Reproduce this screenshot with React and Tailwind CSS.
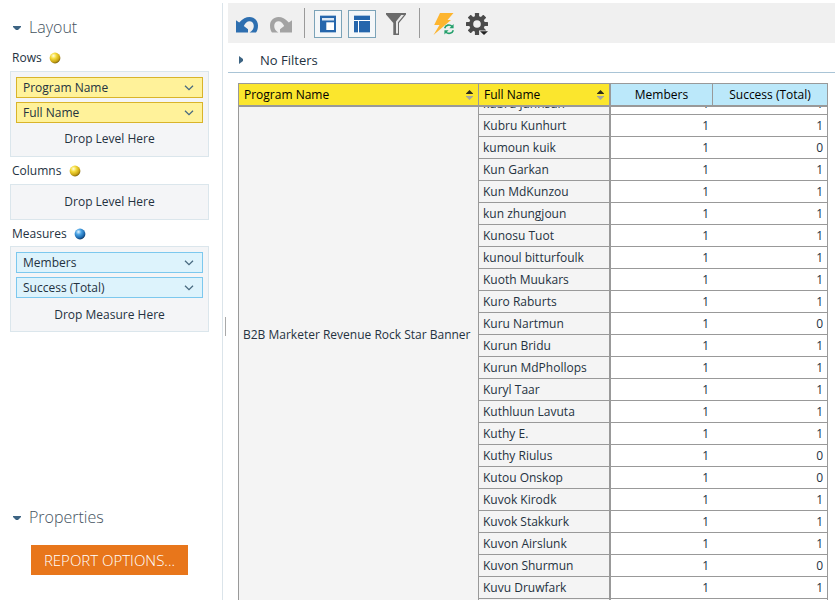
const rows = [
  ['Kubru Kunhurt', 1], ['kumoun kuik', 0], ['Kun Garkan', 1], ['Kun MdKunzou', 1],
  ['kun zhungjoun', 1], ['Kunosu Tuot', 1], ['kunoul bitturfoulk', 1], ['Kuoth Muukars', 1],
  ['Kuro Raburts', 1], ['Kuru Nartmun', 0], ['Kurun Bridu', 1], ['Kurun MdPhollops', 1],
  ['Kuryl Taar', 1], ['Kuthluun Lavuta', 1], ['Kuthy E.', 1], ['Kuthy Riulus', 0],
  ['Kutou Onskop', 0], ['Kuvok Kirodk', 1], ['Kuvok Stakkurk', 1], ['Kuvon Airslunk', 1],
  ['Kuvon Shurmun', 0], ['Kuvu Druwfark', 1],
];

function Ball({ blue }) {
  const id = blue ? 'ballBlue' : 'ballGold';
  return (
    <svg width="12" height="12" viewBox="0 0 12 12" className="-mt-px">
      <defs>
        <radialGradient id={id} cx="0.36" cy="0.3" r="0.75">
          <stop offset="0" stopColor={blue ? '#e2f4ff' : '#fffde0'} />
          <stop offset="0.35" stopColor={blue ? '#4aa3e4' : '#f5dc3c'} />
          <stop offset="0.75" stopColor={blue ? '#1d69ae' : '#c9a414'} />
          <stop offset="1" stopColor={blue ? '#0c2f58' : '#71590c'} />
        </radialGradient>
      </defs>
      <circle cx="6" cy="6" r="5.4" fill={`url(#${id})`} />
    </svg>
  );
}

function Heading({ children }) {
  return (
    <div className="flex h-6 items-center pl-[13px] text-[16px] font-light text-[#44525e]">
      <svg width="8" height="4" viewBox="0 0 8 4" className="mt-[4px] mr-2"><path d="M0 0h8v1L5 4H3L0 1z" fill="#3d6483" /></svg>
      <span className="pt-[2px]">{children}</span>
    </div>
  );
}

function Label({ children, blue, gap }) {
  return (
    <div className="flex h-[26px] items-center pl-3">
      <span className={gap}>{children}</span>
      <Ball blue={blue} />
    </div>
  );
}

function Chip({ children, blue }) {
  return (
    <div className={`flex h-[21px] items-center justify-between border pr-2 pl-1.5 ${blue ? 'border-[#7cc8ee] bg-[#ddf3fc]' : 'border-[#d9b42a] bg-[#fff29a]'}`}>
      <span>{children}</span>
      <svg width="10" height="6" viewBox="0 0 10 6"><path d="M1 .8l4 3.8 4-3.8" fill="none" stroke="#486a80" strokeWidth="1.3" /></svg>
    </div>
  );
}

function Zone({ children, text, size, textPad }) {
  return (
    <div className={`ml-2.5 flex w-[199px] flex-col gap-1 border border-[#dbe6ec] bg-[#f4f5f7] px-[5px] ${size}`}>
      {children}
      <div className={`flex flex-1 items-center justify-center ${textPad || ''}`}>{text}</div>
    </div>
  );
}

function Sort() {
  return (
    <svg width="7" height="10" viewBox="0 0 7 10">
      <path d="M3.5 0L7 3.4V4H0v-.6z" fill="#2c2a16" />
      <path d="M0 6h7v.6L3.5 10 0 6.6z" fill="#a5a5a0" />
    </svg>
  );
}

function Arrow({ color, flip }) {
  return (
    <svg width="22" height="16" viewBox="0 0 22 16" className={flip ? '-scale-x-100' : ''}>
      <path d="M0 3.2L3.2 5.6C6.8 1.6 10 0 13.5 0 18.5 0 22 3.7 22 8.4c0 3-.7 5.6-2 7h-6.4c2.6-1.5 4.2-3.7 4.2-6.5 0-2.7-1.8-4.7-4.4-4.7-2.2 0-4.1 1.6-5.6 4.8l4.2 3.2v3.2H0z" fill={color} />
    </svg>
  );
}

function Gear() {
  return (
    <svg width="23" height="22" viewBox="0 0 23 22">
      <g fill="#4b4b4b">
        {[0, 45, 90, 135].map((a) => (
          <rect key={a} x="8.9" y="0" width="4.2" height="22" rx="0.5" transform={`rotate(${a} 11 11)`} />
        ))}
        <circle cx="11" cy="11" r="7.9" />
      </g>
      <circle cx="11" cy="11" r="3.8" fill="#f0f0f0" />
      <path d="M13 17.5h10v1L18 22.5l-5-4z" fill="#f0f0f0" />
      <path d="M14 18.3h8L18 22z" fill="#222" />
    </svg>
  );
}

export default function App() {
  return (
    <div className="flex h-[600px] w-[835px] overflow-hidden bg-white font-['Open_Sans','Noto_Sans',sans-serif] text-[12px] leading-none text-[#24323f]">
      <aside className="mt-[3px] flex w-[223px] shrink-0 flex-col border-r border-[#dbe4ea] pt-[11px]">
        <Heading>Layout</Heading>
        <div className="pt-[7px]"><Label gap="mr-[7px]">Rows</Label></div>
        <Zone text="Drop Level Here" size="h-[86px] pt-[5px]" textPad="pb-1.5">
          <Chip>Program Name</Chip>
          <Chip>Full Name</Chip>
        </Zone>
        <div className="pt-px"><Label gap="mr-[8px]">Columns</Label></div>
        <Zone text="Drop Level Here" size="h-9" />
        <div className="pt-px"><div className="-mb-px"><Label blue gap="mr-[7px]">Measures</Label></div></div>
        <Zone text="Drop Measure Here" size="h-[86px] pt-[5px]" textPad="pb-[3px]">
          <Chip blue>Members</Chip>
          <Chip blue>Success (Total)</Chip>
        </Zone>
        <div className="pt-[172px]"><Heading>Properties</Heading></div>
        <button className="mt-[17px] ml-[31px] h-[30px] w-[157px] shrink-0 bg-[#e8761b] text-[15px] font-light text-white">REPORT OPTIONS...</button>
      </aside>
      <div className="flex w-[5px] shrink-0 items-start pt-[317px] pl-[2px]"><div className="h-[19px] w-px bg-[#a9a9a9]" /></div>
      <main className="flex min-w-0 flex-1 flex-col pt-[3px]">
        <div className="flex h-10 shrink-0 items-center bg-[#f0f0f0] pl-2">
          <div className="flex items-center gap-3 pt-1"><Arrow color="#2e6fb0" /><Arrow color="#a3a3a3" flip /></div>
          <div className="ml-3 h-[30px] w-px bg-[#9a9a9a]" />
          <div className="ml-[9px] flex gap-1.5 pt-[2px]">
            <div className="flex size-7 items-center justify-center border border-[#7ba3b8] bg-[#f4f7f9]">
              <svg width="16" height="18" viewBox="0 0 16 18"><path d="M0 0h16v18H0z" fill="#aac4de" /><path d="M0 1h16v16H0z" fill="#2566ac" /><path d="M2 3h12v2.5H2z" fill="#dce8f4" /><path d="M6.3 7.3H14V15H6.3z" fill="#fff" /></svg>
            </div>
            <div className="flex size-7 items-center justify-center border border-[#7ba3b8] bg-[#f4f7f9]">
              <svg width="16" height="18" viewBox="0 0 16 18"><path d="M0 0h16v18H0z" fill="#aac4de" /><path d="M0 1h16v16H0z" fill="#2566ac" /><path d="M0 5h16v1H5v12H4V6H0z" fill="#fff" /></svg>
            </div>
          </div>
          <svg width="20" height="22" viewBox="0 0 20 22" className="mt-px ml-2.5"><path d="M0 0h20v1.5L13 10v12H7.3V10L0 1.5z" fill="#6b6b6b" /><path d="M15.2 2H18l-6 7.3V20.5H10V8.5z" fill="#fff" opacity=".85" /></svg>
          <div className="ml-[13px] h-[30px] w-px bg-[#9a9a9a]" />
          <svg width="21" height="22" viewBox="0 0 21 22" className="mt-[2px] ml-[13px]">
            <path d="M7 0h13.5l-6 7H18L.5 22l6-10H1.2z" fill="#fdb52f" />
            <circle cx="16" cy="16.2" r="5.5" fill="#f0f0f0" />
            <path d="M11.7 15.2a4.3 4.3 0 0 1 7.4-1.7M20.3 17.2a4.3 4.3 0 0 1-7.4 1.7" fill="none" stroke="#24a06c" strokeWidth="1.6" />
            <path d="M20.6 11v4.2h-4.2zM11.4 21.4v-4.2h4.2z" fill="#24a06c" />
          </svg>
          <div className="mt-[2px] ml-3"><Gear /></div>
        </div>
        <div className="flex h-[30px] shrink-0 items-center border-b border-[#a9c4d6] pt-[5px] pl-[11px] text-[13px]">
          <svg width="4" height="8" viewBox="0 0 4 8" className="mr-[17px]"><path d="M0 0v8l4-3V3z" fill="#3d6483" /></svg>
          No Filters
        </div>
        <div className="mt-2.5 ml-2.5 flex h-6 w-[590px] shrink-0 border-x border-t border-b-2 border-[#999] text-black">
          <div className="flex w-60 items-center justify-between border-r border-[#999] bg-[#fbe62d] pr-[5px] pl-[5px]">Program Name<Sort /></div>
          <div className="flex w-[132px] items-center justify-between border-r-2 border-[#999] bg-[#fbe62d] pr-[5px] pl-[5px]">Full Name<Sort /></div>
          <div className="flex w-[102px] items-center justify-center border-r border-[#999] bg-[#bbe8fa]">Members</div>
          <div className="flex flex-1 items-center justify-center bg-[#bbe8fa]">Success (Total)</div>
        </div>
        <div className="ml-2.5 flex h-[493px] w-[590px] shrink-0 overflow-hidden border-x border-[#999]">
          <div className="flex w-60 items-center border-r border-[#999] bg-[#f4f4f4] pb-[37px] pl-1 whitespace-nowrap">B2B Marketer Revenue Rock Star Banner</div>
          <div className="flex flex-1 flex-col overflow-hidden">
            <div className="flex h-2 shrink-0 items-end overflow-hidden border-b border-[#999]">
              <div className="flex h-[21px] w-[132px] items-center border-r-2 border-[#999] bg-[#f4f4f4] pl-1">kubru junhsun</div>
              <div className="flex h-[21px] w-[102px] items-center justify-end pr-1">1</div>
              <div className="flex h-[21px] flex-1 items-center justify-end pr-1">1</div>
            </div>
            {rows.map(([name, n]) => (
              <div key={name} className="flex h-[22px] shrink-0 border-b border-[#999]">
                <div className="flex w-[132px] items-center border-r-2 border-[#999] bg-[#f4f4f4] pl-1">{name}</div>
                <div className="flex w-[102px] items-center justify-end pr-1">1</div>
                <div className="flex flex-1 items-center justify-end pr-1">{n}</div>
              </div>
            ))}
            <div className="flex flex-1"><div className="w-[132px] border-r-2 border-[#999] bg-[#f4f4f4]" /></div>
          </div>
        </div>
      </main>
    </div>
  );
}
